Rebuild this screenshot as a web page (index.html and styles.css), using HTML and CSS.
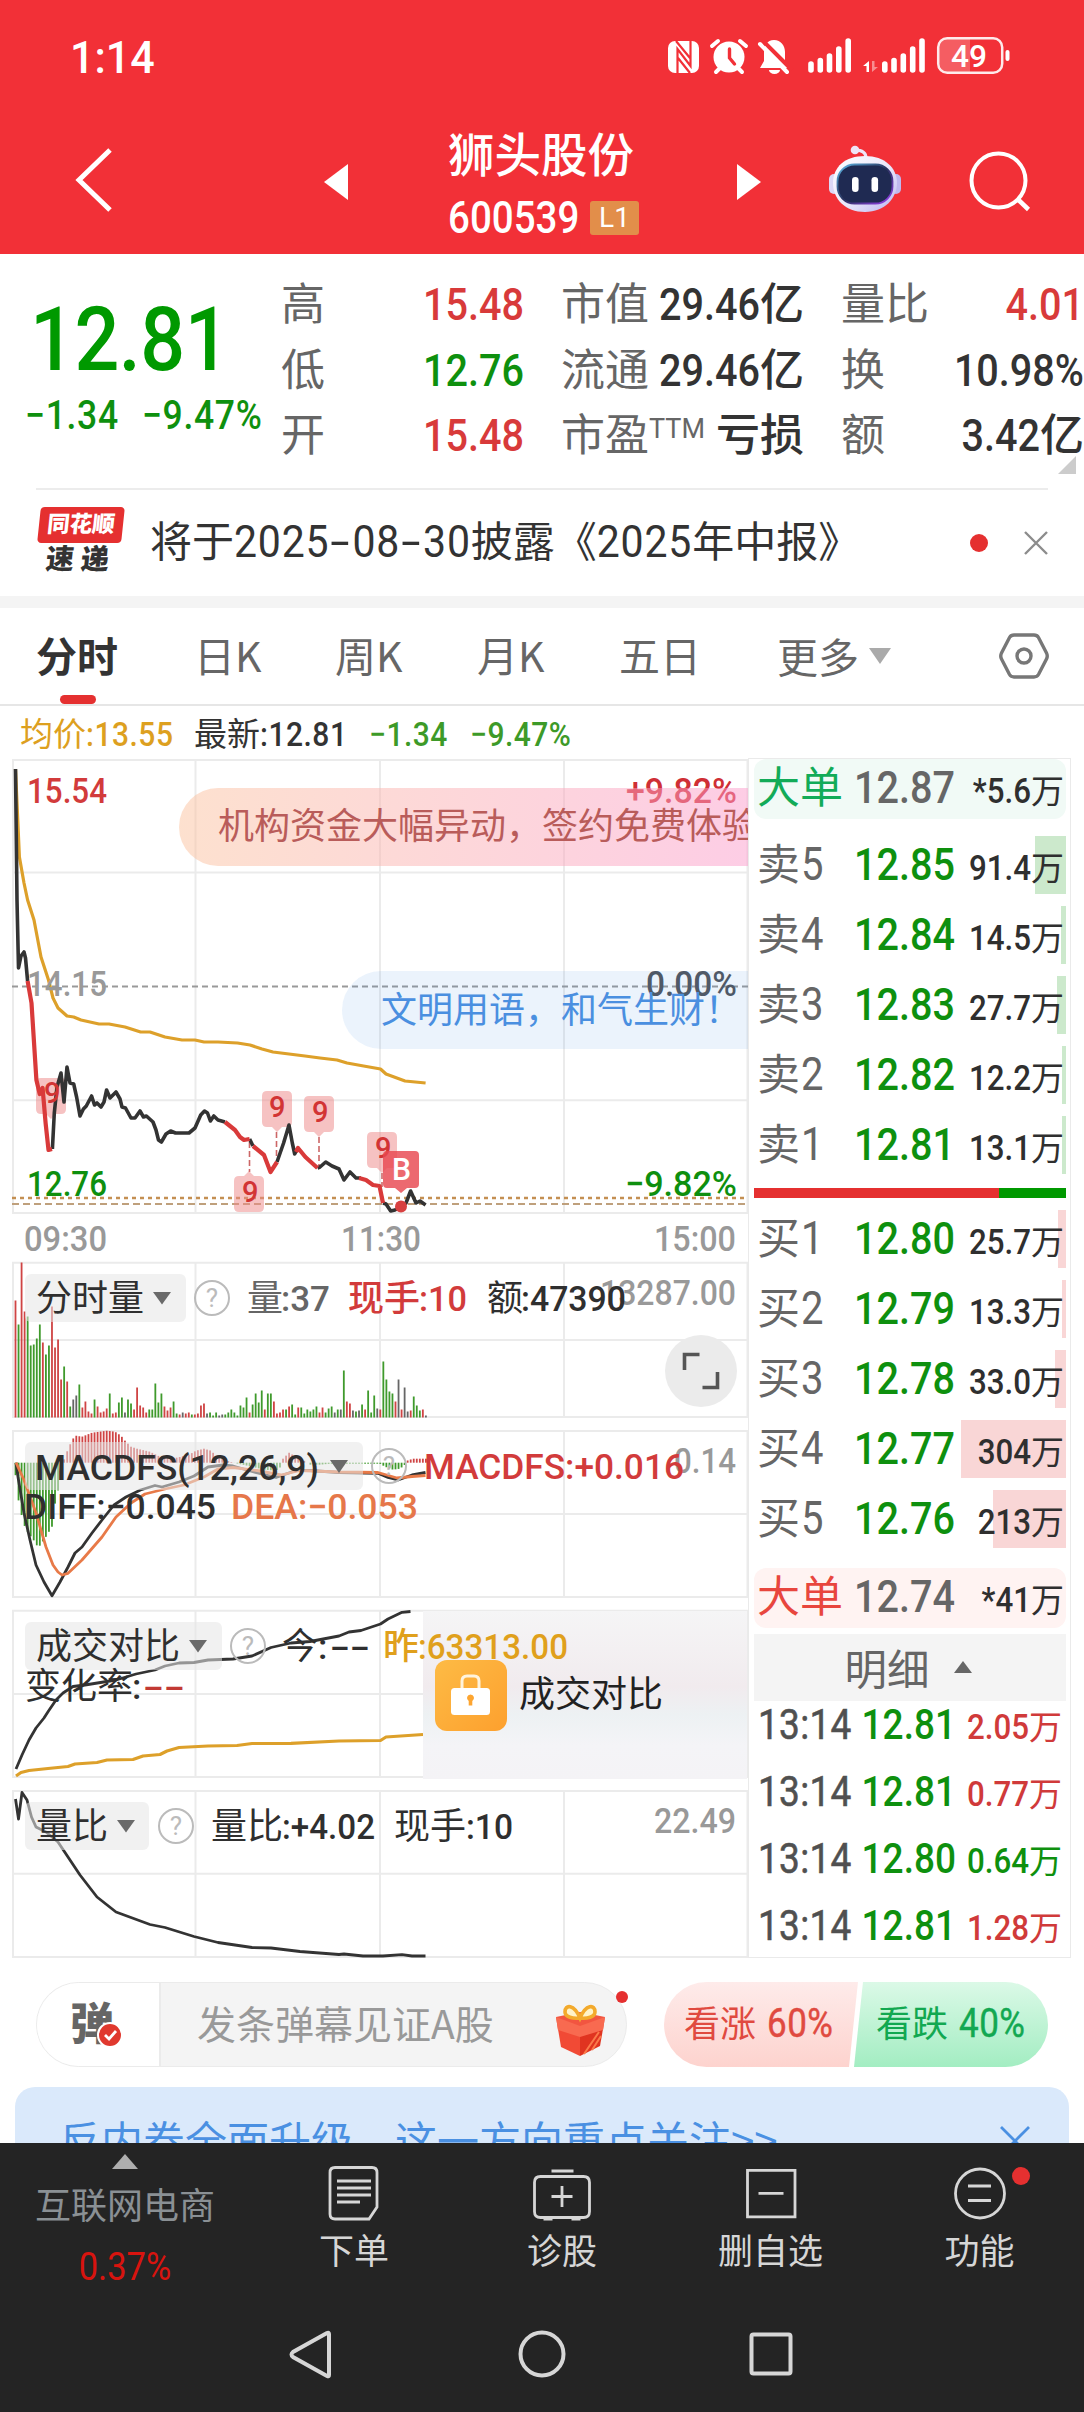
FILE: index.html
```html
<!DOCTYPE html>
<html lang="zh-CN">
<head>
<meta charset="utf-8">
<title>狮头股份 600539</title>
<link rel="stylesheet" href="styles.css">
</head>
<body>
<div class="screen">
  <header class="top">
    <div class="status">
      <span class="clock n">1:14</span>
      <svg class="status-icons" width="346" height="40" viewBox="666 36 346 40">
        <rect x="668" y="41" width="31" height="32" rx="7" fill="#fff"/>
        <path d="M677.500 73V49L690.500 66V41M678 58l12 15M676 41l14 17" fill="none" stroke="#f23037" stroke-width="2.200"/>
        <circle cx="729" cy="57" r="15.500" fill="#fff"/>
        <path d="M712 46l6-5M746 46l-6-5M716 72l5-5M742 72l-5-5" stroke="#fff" stroke-width="4" stroke-linecap="round"/>
        <path d="M729.500 49v9l5 6" fill="none" stroke="#f23037" stroke-width="3.400" stroke-linecap="round"/>
        <path d="M774 40c-7 0-10 6-10 12v9l-4 7h28l-3-7V52c0-6-4-12-11-12z" fill="#fff"/>
        <path d="M769 70h11a5.500 4 0 0 1-11 0z" fill="#fff"/>
        <path d="M762 40l30 30" stroke="#f23037" stroke-width="4"/>
        <path d="M760 44l27 28" stroke="#fff" stroke-width="4" stroke-linecap="round"/>
        <path d="M811 64v6M820.300 60.500v9.500M829.500 56v14M838.800 49v21M848.200 41v29M884.800 64v6M894 60.500v9.500M903.300 56v14M912.700 49v21M922 41v29" stroke="#fff" stroke-width="5.600" stroke-linecap="round"/>
        <path d="M863 66l6-5v11h-2.500v-6z" fill="#fff"/>
        <path d="M878 67l-6 5V61h2.500v6z" fill="#fff" opacity=".45"/>
        <path d="M949 38.500h21v34h-21a10 10 0 0 1-10-10v-14a10 10 0 0 1 10-10z" fill="#fff" opacity=".22"/>
        <rect x="938.200" y="38.200" width="64" height="34.600" rx="9" fill="none" stroke="#fff" stroke-width="2.500" opacity=".9"/>
        <rect x="1005.500" y="50" width="4" height="11" rx="2" fill="#fff"/>
        <text x="951" y="66.500" class="d" font-size="31" fill="#fff" textLength="36" lengthAdjust="spacingAndGlyphs">49</text>
      </svg>
    </div>
    <nav class="nav">
      <svg width="44" height="72" viewBox="72 144 44 72"><path d="M110 150L79 180l31 30" fill="none" stroke="#fff" stroke-width="5"/></svg>
      <svg width="24" height="36" viewBox="0 0 24 36"><path d="M24 0v36L0 18z" fill="#fff"/></svg>
      <div class="title">
        <div class="name">狮头股份</div>
        <div class="code"><span class="n">600539</span><span class="badge">L1</span></div>
      </div>
      <svg width="24" height="36" viewBox="0 0 24 36"><path d="M0 0v36l24-18z" fill="#fff"/></svg>
      <svg class="robot" width="74" height="70" viewBox="828 144 74 70">
        <defs>
          <linearGradient id="shell" x1="0" y1="0" x2="1" y2="1"><stop offset="0" stop-color="#fff"/><stop offset=".55" stop-color="#e9e6fa"/><stop offset="1" stop-color="#b9b4f0"/></linearGradient>
          <linearGradient id="visor" x1="0" y1="0" x2="1" y2="1"><stop offset="0" stop-color="#5fb8e8"/><stop offset=".5" stop-color="#27315c"/><stop offset="1" stop-color="#9a3ff0"/></linearGradient>
        </defs>
        <path d="M855 150c7 0 11 2 11 8" fill="none" stroke="#eee6f8" stroke-width="3"/>
        <circle cx="855" cy="150" r="4.300" fill="#efe4f6"/>
        <rect x="829" y="174" width="10" height="20" rx="5" fill="#dcd8f5"/><rect x="891" y="174" width="10" height="20" rx="5" fill="#bfb8ee"/>
        <path d="M865 156c20 0 32 12 32 27s-12 29-32 29-32-13-32-29 12-27 32-27z" fill="url(#shell)"/>
        <rect x="837.500" y="164.500" width="55" height="39" rx="17" fill="#1f2a52" stroke="url(#visor)" stroke-width="1.800"/>
        <rect x="852" y="177" width="6.600" height="15" rx="3.300" fill="#fff"/><rect x="871.500" y="177" width="6.600" height="15" rx="3.300" fill="#fff"/>
      </svg>
      <svg class="search" width="64" height="64" viewBox="968 150 64 64"><circle cx="998.500" cy="180.500" r="27" fill="none" stroke="#fff" stroke-width="4"/><path d="M1017.500 199l11 10.500" stroke="#fff" stroke-width="4.500"/></svg>
    </nav>
  </header>

  <section class="quote">
    <div class="last">
      <div class="price n">12.81</div>
      <div class="chg"><span class="n">−1.34</span><span class="n">−9.47%</span></div>
    </div>
    <dl class="stats">
      <div><dt>高</dt><dd class="up"><span class="n">15.48</span></dd></div>
      <div><dt>市值</dt><dd><span class="n">29.46</span>亿</dd></div>
      <div><dt>量比</dt><dd class="up"><span class="n">4.01</span></dd></div>
      <div><dt>低</dt><dd class="down"><span class="n">12.76</span></dd></div>
      <div><dt>流通</dt><dd><span class="n">29.46</span>亿</dd></div>
      <div><dt>换</dt><dd><span class="n">10.98%</span></dd></div>
      <div><dt>开</dt><dd class="up"><span class="n">15.48</span></dd></div>
      <div><dt>市盈<sup>TTM</sup></dt><dd>亏损</dd></div>
      <div><dt>额</dt><dd><span class="n">3.42</span>亿</dd></div>
    </dl>
    <i class="corner"></i>
  </section>

  <section class="news">
    <div class="logo"><div class="logo-top">同花顺</div><div class="logo-sub">速递</div></div>
    <p>将于<span class="n">2025<i class="dash">-</i>08<i class="dash">-</i>30</span>披露《<span class="n">2025</span>年中报》</p>
    <i class="dot"></i>
    <svg width="24" height="24" viewBox="0 0 24 24"><path d="M1 1l22 22M23 1L1 23" stroke="#8c8c8c" stroke-width="2.400"/></svg>
  </section>

  <nav class="tabs">
    <span class="tab on">分时</span><span class="tab">日K</span><span class="tab">周K</span><span class="tab">月K</span><span class="tab">五日</span>
    <span class="tab more">更多<svg width="22" height="17" viewBox="0 0 22 17"><path d="M0 1h22L11 17z" fill="#aaa"/></svg></span>
    <svg class="hex" width="50" height="48" viewBox="0 0 50 48"><path d="M15 3h20q3 0 4.500 2.500l8 15.500q1.500 3 0 6l-8 15.500Q38 45 35 45H15q-3 0-4.500-2.500l-8-15.500q-1.500-3 0-6l8-15.500Q12 3 15 3z" fill="none" stroke="#777" stroke-width="3.400"/><circle cx="25" cy="24" r="7" fill="none" stroke="#777" stroke-width="3.400"/></svg>
  </nav>

  <div class="legend">
    <span class="avg">均价<span class="n">:13.55</span></span>
    <span class="lst">最新<span class="n">:12.81</span></span>
    <span class="n g1">−1.34</span>
    <span class="n g1">−9.47%</span>
  </div>

  <main class="board">
    <div class="charts">
      <svg class="chart" width="748" height="502" viewBox="0 754 748 502">
        <defs>
          <linearGradient id="promo" x1="0" x2="1"><stop offset="0" stop-color="#fbc29e"/><stop offset="1" stop-color="#fb9bcb"/></linearGradient>
        </defs>
        <path class="grid" d="M12 760H748M12 872.500H748M12 1100.300H748M12 1213H748M13 760V1213M195.500 760V1213M380 760V1213M564 760V1213M747.500 760V1213"/>
        <path d="M12 986.500H748" stroke="#999" stroke-width="2" stroke-dasharray="6 4"/>
        <path d="M12 1198H748" stroke="#c48f52" stroke-width="2.300" stroke-dasharray="4 4"/>
        <path d="M12 1204H748" stroke="#bfa07c" stroke-width="2" stroke-dasharray="7 4"/>
        <polyline class="ln avgline" points="15.500,769 19.400,857 24,883 27.600,900 34,920 41,957 48.500,980 53,998 58,1008 67,1016 73.700,1017 81,1020 99,1024 109,1024 125,1027 140.600,1032 150,1032 165,1037 182,1040 195,1040 204,1042 218,1042 237.500,1043 250,1045 262,1049 273,1052 305,1056 320,1058 337,1060 347,1063 363.600,1066 380.500,1069 386,1074 405,1081 425.600,1083"/>
        <g class="flags">
          <path d="M276.500 1132v24M319 1137v30M249.500 1142v30M382 1173v14" stroke="#c66" stroke-width="1.600" stroke-dasharray="6 3" fill="none"/>
          <path class="flag" d="M41 1078h20q5 0 5 5v26q0 5-5 5h-5l-5 5-5-5h-5q-5 0-5-5v-26q0-5 5-5z"/>
          <path class="flag" d="M267 1091h20q5 0 5 5v26q0 5-5 5h-5l-5 5-5-5h-5q-5 0-5-5v-26q0-5 5-5z"/>
          <path class="flag" d="M309 1096h20q5 0 5 5v26q0 5-5 5h-5l-5 5-5-5h-5q-5 0-5-5v-26q0-5 5-5z"/>
          <path class="flag" d="M372 1132h20q5 0 5 5v26q0 5-5 5h-5l-5 5-5-5h-5q-5 0-5-5v-26q0-5 5-5z"/>
          <path class="flag" d="M239 1212h20q5 0 5-5v-26q0-5-5-5h-5l-5-5-5 5h-5q-5 0-5 5v26q0 5 5 5z"/>
        </g>
        <polyline class="ln px" points="15.500,769 17,900 18.500,968 21,956 24,952 25.500,958 27.600,981"/>
        <polyline class="ln px" points="52.400,1149 54.300,1113 57,1087 61,1073 64,1102 67,1067 70,1083 73.700,1084 76.600,1097 80,1116 83.400,1109 86.300,1106 91.600,1096 94.500,1105 97,1103 101,1107 104,1102 106.600,1090 110,1098 116,1092 120,1099 122,1107 125.500,1108 131,1118 135,1118 140,1111 143.500,1117 146.400,1116 153,1122 156,1130 158.500,1140 161.400,1142 166,1134 170.600,1131 175.500,1133 189,1133 195,1128 200.700,1115 204.500,1111 207.500,1113 210.400,1121 213.800,1116 218,1120 225,1122"/>
        <polyline class="ln px" points="249.600,1139 253,1146"/>
        <polyline class="ln px" points="277,1162 283.600,1143 289,1125 292.300,1143 294.700,1154 298,1148"/>
        <polyline class="ln px" points="317.500,1168 320,1167 325.700,1162 332,1166 339,1169 344,1180 350,1172 356,1178 361,1178"/>
        <polyline class="ln px" points="383,1203 386,1204 390.700,1211 395,1210 401,1207 406,1203 410.600,1191 416,1203 420,1201 425.600,1205"/>
        <polyline class="ln red" points="27.600,981 31.500,1003 36.400,1080 39.700,1094 42.600,1088 45.600,1123 48.500,1150 52,1149"/>
        <polyline class="ln red" points="225,1122 235,1130 240,1137 244,1140 249.600,1139"/>
        <polyline class="ln red" points="253,1146 264,1155 270.500,1172 277,1162"/>
        <polyline class="ln red" points="296,1152 298,1148 305.400,1157 317.500,1168"/>
        <polyline class="ln red" points="359,1178 366,1180 373,1185 379.500,1186 383,1203"/>
        <circle cx="401" cy="1206.500" r="6" fill="#d84040"/>
        <g class="d nine"><text x="44" y="1103">9</text><text x="269" y="1116.500">9</text><text x="312" y="1121.500">9</text><text x="242" y="1202">9</text><text x="375" y="1158">9</text></g>
        <path d="M387 1151h28q4 0 4 4v29q0 4-4 4h-8l-6 5-6-5h-8q-4 0-4-4v-29q0-4 4-4z" fill="#e84850" opacity=".82"/>
        <text class="d" x="392" y="1179.500" font-size="31" fill="#fff" textLength="19" lengthAdjust="spacingAndGlyphs">B</text>
        <g class="d ax">
          <text x="27" y="802.500" fill="#d23b3b" textLength="80" lengthAdjust="spacingAndGlyphs">15.54</text>
          <text x="626" y="802.500" fill="#cf2f35" textLength="111" lengthAdjust="spacingAndGlyphs">+9.82%</text>
          <text x="27" y="995.500" fill="#999" textLength="80" lengthAdjust="spacingAndGlyphs">14.15</text>
          <text x="646" y="995.500" fill="#505258" textLength="91" lengthAdjust="spacingAndGlyphs">0.00%</text>
          <text x="27" y="1196" fill="#0e8f0e" textLength="80" lengthAdjust="spacingAndGlyphs">12.76</text>
          <text x="625" y="1196" fill="#0e8f0e" textLength="112" lengthAdjust="spacingAndGlyphs">−9.82%</text>
          <text x="24" y="1251" fill="#999" textLength="83" lengthAdjust="spacingAndGlyphs">09:30</text>
          <text x="341" y="1251" fill="#999" textLength="80" lengthAdjust="spacingAndGlyphs">11:30</text>
          <text x="654" y="1251" fill="#999" textLength="82" lengthAdjust="spacingAndGlyphs">15:00</text>
        </g>
        <path d="M748 788H218a39 39 0 0 0 0 78H748z" fill="url(#promo)" opacity=".5"/>
        <text class="c" x="218" y="839" fill="#b95c5a">机构资金大幅异动，签约免费体验</text>
        <path d="M748 971H381a39 39 0 0 0 0 78H748z" fill="#4a90e2" opacity=".11"/>
        <text class="c" x="381" y="1022.500" fill="#4a8fe0">文明用语，和气生财！</text>
      </svg>

      <svg class="chart" width="748" height="168" viewBox="0 1256 748 168">
        <path class="grid" d="M12 1262.700H748M12 1340H748M12 1417H748M13 1263V1417M195.500 1263V1417M380 1263V1417M564 1263V1417M747.500 1263V1417"/>
        <g id="volume"></g>
        <rect class="chip" x="25" y="1274" width="161" height="48" rx="6"/>
        <text class="c k" x="36" y="1311">分时量</text>
        <path class="tri" d="M153 1292h18l-9 12.500z"/>
        <circle class="help" cx="212" cy="1298" r="17"/><text class="q" x="212" y="1307">?</text>
        <text class="c" x="247" y="1311" fill="#666">量</text><text class="d m" x="281" y="1311" fill="#666" textLength="49" lengthAdjust="spacingAndGlyphs">:37</text>
        <text class="c" x="348" y="1311" fill="#d23b3b" font-weight="500">现手</text><text class="d m" x="419" y="1311" fill="#d23b3b" textLength="48" lengthAdjust="spacingAndGlyphs">:10</text>
        <text class="d m" x="600" y="1305" fill="#999" textLength="136" lengthAdjust="spacingAndGlyphs">13287.00</text>
        <text class="c k" x="487" y="1311">额</text><text class="d m k" x="521" y="1311" textLength="105" lengthAdjust="spacingAndGlyphs">:47390</text>
        <circle cx="701" cy="1371" r="36" fill="#ebebeb"/>
        <path d="M684.500 1370v-15.500h15M717.500 1372v15.500h-15" fill="none" stroke="#555" stroke-width="3.600"/>
      </svg>

      <svg class="chart" width="748" height="180" viewBox="0 1424 748 180">
        <path class="grid" d="M12 1431H748M12 1514H748M12 1597H748M13 1431V1597M195.500 1431V1597M380 1431V1597M564 1431V1597M747.500 1431V1597"/>
        <g id="macd"></g>
        <path id="diff" class="ln thin"/>
        <path id="dea" class="ln thin dea"/>
        <rect class="chip" x="25" y="1442" width="338" height="48" rx="6"/>
        <text class="d m k" x="35" y="1479.500" textLength="284" lengthAdjust="spacingAndGlyphs">MACDFS(12,26,9)</text>
        <path class="tri" d="M330 1460h18l-9 13z"/>
        <circle class="help" cx="389" cy="1466" r="17"/><text class="q" x="389" y="1475">?</text>
        <text class="d m" x="674" y="1473" fill="#999" textLength="62" lengthAdjust="spacingAndGlyphs">0.14</text>
        <text class="d m" x="424" y="1479" fill="#d23b3b" textLength="260" lengthAdjust="spacingAndGlyphs">MACDFS:+0.016</text>
        <text class="d m k" x="24" y="1518.500" textLength="192" lengthAdjust="spacingAndGlyphs">DIFF:−0.045</text>
        <text class="d m" x="231" y="1518.500" fill="#e6774a" textLength="187" lengthAdjust="spacingAndGlyphs">DEA:−0.053</text>
      </svg>

      <svg class="chart" width="748" height="180" viewBox="0 1604 748 180">
        <defs>
          <linearGradient id="frost" x1="0" y1="0" x2="0" y2="1"><stop offset="0" stop-color="#f5f5f6"/><stop offset=".45" stop-color="#f1ebee"/><stop offset=".62" stop-color="#edf1f3"/><stop offset=".8" stop-color="#f4f4f7"/><stop offset="1" stop-color="#f4f3f6"/></linearGradient>
          <linearGradient id="gold" x1="0" y1="0" x2="1" y2="1"><stop offset="0" stop-color="#fdbb45"/><stop offset="1" stop-color="#fda02e"/></linearGradient>
        </defs>
        <path class="grid" d="M12 1610.700H748M12 1694H748M12 1777H748M13 1611V1777M195.500 1611V1777M380 1611V1777M564 1611V1777M747.500 1611V1777"/>
        <path id="today" class="ln thin"/>
        <path id="yesterday" class="ln avgline"/>
        <rect x="423" y="1611" width="324" height="168" fill="url(#frost)"/>
        <rect class="chip" x="25" y="1622" width="197" height="48" rx="6"/>
        <text class="c k" x="36" y="1659">成交对比</text>
        <path class="tri" d="M189 1640h18l-9 12.500z"/>
        <circle class="help" cx="248" cy="1646" r="17"/><text class="q" x="248" y="1655">?</text>
        <text class="c k" x="282" y="1659">今</text><text class="d m k" x="318" y="1659">:</text><text class="d m k" x="330" y="1659" textLength="40" lengthAdjust="spacingAndGlyphs">--</text>
        <text class="c" x="383" y="1659" fill="#e0a01c" font-weight="500">昨</text><text class="d m" x="418" y="1659" fill="#e0a01c" textLength="150" lengthAdjust="spacingAndGlyphs">:63313.00</text>
        <text class="c k" x="25" y="1699">变化率</text><text class="d m k" x="132" y="1699">:</text><text class="d m" x="143" y="1699" fill="#c23a34" textLength="42" lengthAdjust="spacingAndGlyphs">--</text>
        <rect x="435" y="1660" width="72" height="71" rx="12" fill="url(#gold)"/>
        <path d="M462 1689v-8q0-5 5-5h7q5 0 5 5v8" fill="none" stroke="#fff3dc" stroke-width="3"/>
        <rect x="451" y="1688" width="39" height="27" rx="3.500" fill="#fff"/>
        <path d="M470.500 1694.500a3.500 3.500 0 0 1 1.800 6.500v4.500h-3.600v-4.500a3.500 3.500 0 0 1 1.800-6.500z" fill="#fda530"/>
        <text class="c" x="519" y="1706.500" fill="#222">成交对比</text>
      </svg>

      <svg class="chart" width="748" height="176" viewBox="0 1784 748 176">
        <path class="grid" d="M12 1791H748M12 1873.700H748M12 1957H748M13 1791V1957M195.500 1791V1957M380 1791V1957M564 1791V1957M747.500 1791V1957"/>
        <path id="ratio" class="ln thin"/>
        <rect class="chip" x="25" y="1802" width="124" height="48" rx="6"/>
        <text class="c k" x="36" y="1839">量比</text>
        <path class="tri" d="M117 1820h18l-9 12.500z"/>
        <circle class="help" cx="176" cy="1826" r="17"/><text class="q" x="176" y="1835">?</text>
        <text class="c k" x="211" y="1839">量比</text><text class="d m k" x="282" y="1839" textLength="93" lengthAdjust="spacingAndGlyphs">:+4.02</text>
        <text class="c k" x="394" y="1839">现手</text><text class="d m k" x="466" y="1839" textLength="47" lengthAdjust="spacingAndGlyphs">:10</text>
        <text class="d m" x="654" y="1833" fill="#999" textLength="82" lengthAdjust="spacingAndGlyphs">22.49</text>
      </svg>
    </div>

    <aside class="book">
      <div class="row big sell"><span class="lb">大单</span><span class="pr n">12.87</span><span class="vo"><span class="n">*5.6</span>万</span></div>
      <div class="side sells">
        <div class="row"><i class="depth" style="width:31px"></i><span class="lb">卖<span class="n">5</span></span><span class="pr n">12.85</span><span class="vo"><span class="n">91.4</span>万</span></div>
        <div class="row"><i class="depth" style="width:5px"></i><span class="lb">卖<span class="n">4</span></span><span class="pr n">12.84</span><span class="vo"><span class="n">14.5</span>万</span></div>
        <div class="row"><i class="depth" style="width:9px"></i><span class="lb">卖<span class="n">3</span></span><span class="pr n">12.83</span><span class="vo"><span class="n">27.7</span>万</span></div>
        <div class="row"><i class="depth" style="width:4px"></i><span class="lb">卖<span class="n">2</span></span><span class="pr n">12.82</span><span class="vo"><span class="n">12.2</span>万</span></div>
        <div class="row"><i class="depth" style="width:4px"></i><span class="lb">卖<span class="n">1</span></span><span class="pr n">12.81</span><span class="vo"><span class="n">13.1</span>万</span></div>
      </div>
      <div class="balance"><i></i></div>
      <div class="side buys">
        <div class="row"><i class="depth" style="width:8px"></i><span class="lb">买<span class="n">1</span></span><span class="pr n">12.80</span><span class="vo"><span class="n">25.7</span>万</span></div>
        <div class="row"><i class="depth" style="width:4px"></i><span class="lb">买<span class="n">2</span></span><span class="pr n">12.79</span><span class="vo"><span class="n">13.3</span>万</span></div>
        <div class="row"><i class="depth" style="width:11px"></i><span class="lb">买<span class="n">3</span></span><span class="pr n">12.78</span><span class="vo"><span class="n">33.0</span>万</span></div>
        <div class="row"><i class="depth" style="width:105px"></i><span class="lb">买<span class="n">4</span></span><span class="pr n">12.77</span><span class="vo"><span class="n">304</span>万</span></div>
        <div class="row"><i class="depth" style="width:73px"></i><span class="lb">买<span class="n">5</span></span><span class="pr n">12.76</span><span class="vo"><span class="n">213</span>万</span></div>
      </div>
      <div class="row big buy"><span class="lb">大单</span><span class="pr n">12.74</span><span class="vo"><span class="n">*41</span>万</span></div>
      <div class="detail">明细<svg width="18" height="12" viewBox="0 0 18 12"><path d="M0 12h18L9 0z" fill="#666"/></svg></div>
      <div class="ticks">
        <div class="row up"><span class="tm n">13:14</span><span class="pr n">12.81</span><span class="vo"><span class="n">2.05</span>万</span></div>
        <div class="row up"><span class="tm n">13:14</span><span class="pr n">12.81</span><span class="vo"><span class="n">0.77</span>万</span></div>
        <div class="row down"><span class="tm n">13:14</span><span class="pr n">12.80</span><span class="vo"><span class="n">0.64</span>万</span></div>
        <div class="row up"><span class="tm n">13:14</span><span class="pr n">12.81</span><span class="vo"><span class="n">1.28</span>万</span></div>
      </div>
    </aside>
  </main>

  <section class="talk">
    <div class="danmu">
      <div class="switch">弹<svg width="26" height="26" viewBox="0 0 26 26"><circle cx="13" cy="13" r="12" fill="#e0392f" stroke="#fff" stroke-width="2"/><path d="M8 13l4 4 7-8" fill="none" stroke="#fff" stroke-width="2.800"/></svg></div>
      <div class="input"><span>发条弹幕见证A股</span>
        <svg class="gift" width="52" height="54" viewBox="554 2005 52 54">
          <path d="M556 2019l24-5 25 5-2 13-23 6-22-6z" fill="#f25540"/>
          <path d="M558 2031l22 7v20l-19-9z" fill="#f14a35"/><path d="M603 2031l-23 7v20l20-10z" fill="#e03420"/>
          <path d="M556 2019l24 9 25-9-2 13-23 7-22-7z" fill="#f86a50"/>
          <path d="M584 2056l15-22M592 2052l9-14" stroke="#fb7a4a" stroke-width="2"/>
          <path d="M580 2020c-6-14-15-14-15-6 0 5 8 7 15 6 7 1 15-1 15-6 0-8-9-8-15 6z" fill="#fff3c8" stroke="#f3aa2c" stroke-width="3.600"/>
        </svg>
      </div>
      <i class="dot"></i>
    </div>
    <div class="vote">
      <div class="bull">看涨 <span class="n">60%</span></div>
      <div class="bear">看跌 <span class="n">40%</span></div>
    </div>
  </section>

  <section class="banner">
    <span>反内卷全面升级，这一方向重点关注<span class="gt">&gt;&gt;</span></span>
    <svg width="30" height="30" viewBox="0 0 30 30"><path d="M1 1l28 28M29 1L1 29" stroke="#4a90e2" stroke-width="2.800"/></svg>
  </section>

  <footer class="dock">
    <div class="index"><i class="arrow"></i><span>互联网电商</span><b class="n">0.37%</b></div>
    <div class="item"><svg width="58" height="56" viewBox="325 2165 58 56"><path d="M335 2167.500h37q5 0 5 5V2207l-8 12h-34q-5 0-5-5v-41.500q0-5 5-5zM337 2181h34M337 2188h34M337 2195h34M337 2202h23"/></svg>下单</div>
    <div class="item"><svg width="60" height="56" viewBox="531.500 2165 60 56"><path d="M551 2171h22M540 2176.500h43q6 0 6 6v29q0 6-6 6h-43q-6 0-6-6v-29q0-6 6-6zM561.500 2186v21M551 2196.500h21M543 2219h9M571 2219h9"/></svg>诊股</div>
    <div class="item"><svg width="58" height="56" viewBox="741.500 2165 58 56"><path d="M747 2170.300h47.500v46.500H747zM758 2193.300h25"/></svg>删自选</div>
    <div class="item"><svg width="58" height="56" viewBox="950 2165 58 56"><circle cx="979" cy="2193.500" r="24.500"/><path d="M967 2186h23M967 2200.500h23"/></svg>功能<i class="dot"></i></div>
  </footer>
  <div class="sysnav">
    <svg width="44" height="50" viewBox="288 2329 44 50"><path d="M329 2334v41q0 2-2 1l-34-19q-3-2.500 0-5l34-19q2-1 2 1z"/></svg>
    <svg width="50" height="50" viewBox="517 2329 50 50"><circle cx="542" cy="2354" r="21.500"/></svg>
    <svg width="48" height="50" viewBox="747.500 2329 48 50"><rect x="752" y="2334.500" width="39" height="39" rx="2"/></svg>
  </div>
</div>
<script src="charts.js"></script>
</body>
</html>
```

FILE: styles.css
```css
* { box-sizing: border-box; margin: 0; padding: 0; }
body {
  width: 1084px; height: 2412px; overflow: hidden; background: #fff; color: #333;
  font-family: Roboto, "Noto Sans CJK SC", sans-serif;
}
i { font-style: normal; }
svg { display: block; flex: none; }
.screen { width: 1084px; height: 2412px; display: flex; flex-direction: column; overflow: hidden; }
.screen > * { flex: none; }

/* tall, narrow figures */
.n {
  display: inline-block; font-family: Roboto, sans-serif; font-weight: 500; line-height: 1;
  transform: scaleY(1.136); transform-origin: 0 84%; white-space: nowrap;
}
.up { color: #d83a3a; }
.down { color: #0e900e; }

/* header */
.top { height: 254px; background: #f23037; color: #fff; }
.status { height: 110px; padding: 36px 72px 0 70px; display: flex; justify-content: space-between; }
.clock { font-size: 43px; height: 43px; margin-top: 1px; transform: scaleY(1.05); }
.nav {
  height: 144px; display: grid; align-items: start; justify-items: start;
  grid-template-columns: 252px 113px 300px 91px 140px 1fr; padding-left: 72px;
}
.nav > svg { margin-top: 54px; }
.nav > svg:first-child { margin-top: 34px; }
.nav > .robot { margin-top: 34px; }
.nav > .search { margin-top: 40px; }
.title { padding-left: 11px; }
.name { font-size: 46.500px; line-height: 54px; font-weight: 500; margin-top: 19px; white-space: nowrap; }
.code { display: flex; align-items: center; margin-top: 17px; height: 40px; }
.code .n { font-size: 38.500px; width: 142px; }
.badge { width: 49px; height: 34px; margin-top: -4px; border-radius: 3px; background: #e28e4a; font-size: 28px; line-height: 34px; text-align: center; }

/* quote */
.quote { height: 234px; display: flex; position: relative; }
.last { width: 281px; color: #009900; }
.price { font-size: 79px; padding-left: 30px; margin-top: 50px; letter-spacing: -.5px; }
.chg { display: flex; gap: 23px; padding-left: 25px; margin-top: 17px; color: #0e900e; font-size: 35.500px; letter-spacing: .7px; }
.stats { display: grid; grid-template-columns: 243px 243px 243px; grid-auto-rows: 65.500px; column-gap: 37px; padding-top: 19px; }
.stats > div { display: flex; justify-content: space-between; align-items: baseline; font-size: 44px; line-height: 64px; white-space: nowrap; }
.stats dt { color: #666; }
.stats dd { font-weight: 500; }
.stats .n { font-size: 39.600px; }
.stats sup { font-size: 27px; line-height: 1; vertical-align: 13px; font-weight: 400; }
.corner { position: absolute; right: 8px; bottom: 14px; border: 9px solid transparent; border-right-color: #ccc; border-bottom-color: #ccc; }

/* news */
.news { height: 108px; margin: 0 36px; border-top: 2px solid #ececec; display: flex; align-items: center; }
.news p { flex: 1; font-size: 42px; white-space: nowrap; margin-left: 24px; line-height: 60px; }
.news .n { font-size: 41px; font-weight: 400; transform: scaleY(1.1); letter-spacing: .8px; }
.dash { display: inline-block; width: 23px; text-align: center; transform: scaleX(1.7); }
.dot { display: block; width: 18px; height: 18px; border-radius: 50%; background: #e53030; }
.news .dot { margin-right: 36px; }
.logo { width: 90px; height: 74px; font-weight: 900; white-space: nowrap; }
.logo-top { height: 36px; width: 84px; margin: 1px 0 0 3px; border-radius: 4px; background: #e53030; color: #fff; font-size: 22.500px; line-height: 35px; text-align: center; transform: skewX(-6deg); }
.logo-sub { font-size: 28px; line-height: 34px; letter-spacing: 7px; padding-left: 10px; transform: skewX(-6deg); }

/* tabs */
.tabs { height: 110px; border-top: 12px solid #f4f4f4; border-bottom: 2px solid #e6e6e6; display: grid; grid-template-columns: 158px 141px 142px 142px 158px 222px 1fr; padding-left: 36px; font-size: 41px; line-height: 92px; color: #666; white-space: nowrap; font-family: "Noto Sans CJK SC", sans-serif; }
.tab { position: relative; }
.tab.on { font-weight: 700; color: #333; }
.tab.on::after { content: ""; position: absolute; left: 24px; bottom: 0; width: 36px; height: 9px; border-radius: 5px; background: #e53030; }
.more { display: flex; align-items: center; gap: 10px; height: 94px; }
.hex { margin: 24px 0 0 0; }

.legend { height: 48px; display: flex; align-items: baseline; font-size: 33px; line-height: 57px; padding-left: 20px; white-space: nowrap; }
.legend .n { font-size: 30px; letter-spacing: .5px; }
.avg { width: 174px; color: #dda01f; }
.lst { width: 175px; }
.g1 { color: #3d9a28; width: 101px; }

/* board */
.board { height: 1206px; display: flex; }
.charts { width: 748px; display: flex; flex-direction: column; }
.grid { stroke: #ebebeb; stroke-width: 2; fill: none; }
.ln { fill: none; stroke: #333; stroke-width: 3.600; stroke-linejoin: round; }
.ln.red { stroke: #d93a3a; stroke-width: 4.200; }
.ln.thin { stroke-width: 2.800; }
.ln.avgline { stroke: #dda02a; stroke-width: 3.200; }
.ln.dea { stroke: #e87a48; }
.flag { fill: #ee8a8a; opacity: .52; }
.nine { font-size: 29px; fill: #d23434; }
.d { font-family: Roboto, sans-serif; font-weight: 500; }
.ax, .m { font-size: 35.500px; }
.c { font-family: "Noto Sans CJK SC", sans-serif; font-size: 36px; }
.k { fill: #2f2f2f; }
.chip { fill: #e6e6e6; opacity: .55; }
.tri { fill: #6a6a6a; }
.help { fill: none; stroke: #bbb; stroke-width: 2; }
.q { font: 26px Roboto, sans-serif; fill: #bbb; text-anchor: middle; }

.book { width: 323px; height: 1200px; margin-top: 4px; border: 1px solid #eaeaea; padding: 0 4px 0 5px; }
.row { position: relative; height: 58px; display: grid; grid-template-columns: 80px 118px 109px; align-items: baseline; padding-left: 3px; font-size: 43px; line-height: 58px; color: #666; white-space: nowrap; }
.row > span { position: relative; }
.row .lb .n { font-weight: 400; font-size: 40px; margin-left: 1px; }
.row .pr { font-size: 39.600px; justify-self: end; text-align: right; color: #0e900e; }
.row .vo { font-size: 33px; color: #2f2f2f; justify-self: end; }
.row .vo .n { font-size: 31.300px; }
.depth { position: absolute; right: 0; top: 0; bottom: 0; }
.sells .depth { background: #cce9cc; }
.buys .depth { background: #f9d6d6; }
.side { display: grid; grid-template-columns: 312px; gap: 12px; }
.sells { margin-top: 17px; }
.buys { margin-top: 12px; }
.big { height: 60px; border-radius: 12px; }
.big .pr.n { color: #666; }
.sell { background: #f1faf6; }
.sell .lb { color: #12ab58; }
.buy { background: #fff3f2; margin-top: 20px; }
.buy .lb { color: #e8463e; }
.balance { height: 10px; margin-top: 14px; background: #009900; }
.balance i { display: block; width: 245px; height: 10px; background: #e53030; }
.detail { height: 67px; margin-top: 6px; background: #f4f4f4; display: flex; align-items: center; justify-content: center; gap: 24px; padding-right: 4px; padding-bottom: 2px; font-size: 42.500px; color: #666; }
.ticks { display: grid; grid-template-columns: 312px; grid-auto-rows: 67px; }
.ticks .row { grid-template-columns: 94px 104px 106px; line-height: 53px; height: 67px; padding-left: 4px; }
.ticks .tm { font-size: 37px; color: #505050; font-weight: 400; -webkit-text-stroke: .5px #505050; letter-spacing: .3px; }
.ticks .pr { font-size: 37px; }
.ticks .row.up .vo { color: #d03a3a; }
.ticks .row.down .vo { color: #0e900e; }

/* chat and vote */
.talk { height: 127px; display: flex; gap: 37px; padding: 22px 36px 0; }
.danmu { position: relative; width: 591px; height: 85px; display: flex; border: 1.500px solid #ebebeb; border-radius: 43px; background: #f4f4f4; }
.switch { position: relative; width: 124px; background: #fff; border-right: 2px solid #ebebeb; border-radius: 43px 0 0 43px; padding-left: 33px; font: 900 44px/76px "Noto Sans CJK SC", sans-serif; color: #666; }
.switch svg { position: absolute; left: 60px; top: 39px; }
.input { flex: 1; display: flex; align-items: center; justify-content: space-between; padding: 0 20px 0 36px; font: 39px/80px "Noto Sans CJK SC", sans-serif; color: #999; white-space: nowrap; }
.input span { padding-bottom: 5px; }
.gift { margin-top: 10px; }
.danmu > .dot { position: absolute; right: -2px; top: 8px; width: 12px; height: 12px; }
.vote { width: 384px; height: 85px; display: flex; border-radius: 43px; overflow: hidden; font: 36px/78px "Noto Sans CJK SC", sans-serif; white-space: nowrap; }
.vote > div { display: flex; align-items: baseline; gap: 11px; }
.vote .n { font-size: 35px; font-weight: 400; letter-spacing: .5px; -webkit-text-stroke: .4px; }
.bull { width: 194px; padding-left: 20px; color: #e04a40; background: linear-gradient(#feebea, #fdd3ce); clip-path: polygon(0 0, 100% 0, 185px 100%, 0 100%); }
.bear { flex: 1; margin-left: -4px; padding-left: 22px; color: #12a851; background: linear-gradient(#dbf9e7, #a3edc2); clip-path: polygon(9px 0, 100% 0, 100% 100%, 0 100%); }

.banner { height: 56px; margin: 0 15px; overflow: hidden; border-radius: 20px 20px 0 0; background: #dae9fb; color: #4a90e2; display: flex; justify-content: space-between; align-items: flex-start; padding: 0 39px 0 44px; font: 42px/60px "Noto Sans CJK SC", sans-serif; white-space: nowrap; }
.banner > span { margin-top: 22px; }
.banner svg { margin-top: 39px; }

/* bottom */
.dock { height: 154px; background: #242424; color: #d6d6d6; display: grid; grid-template-columns: 250px 208px 208px 209px 209px; font: 35px/44px "Noto Sans CJK SC", sans-serif; }
.index { display: flex; flex-direction: column; align-items: center; width: 250px; color: #8a9094; font-size: 36px; }
.arrow { border: 13px solid transparent; border-top: 0; border-bottom: 15px solid #aeaeae; margin-top: 11px; }
.index span { margin-top: 12px; }
.index b { font-size: 34.500px; font-weight: 400; color: #d8140f; margin-top: 26px; }
.item { position: relative; display: flex; flex-direction: column; align-items: center; padding-top: 22px; gap: 6px; }
.item svg { fill: none; stroke: #d6d6d6; stroke-width: 2.800; }
.item .dot { position: absolute; left: 137px; top: 24px; }
.sysnav { height: 115px; background: #242424; display: grid; grid-template-columns: 229px 230px 1fr; padding: 32px 0 0 288px; }
.sysnav svg { fill: none; stroke: #d6d6d6; stroke-width: 4; }
```

FILE: charts.js
```js
const NS = "http://www.w3.org/2000/svg";
const GREEN = "#3f9a2c", RED = "#cf4444", DARK = "#666";

function bar(parent, x, y0, y1, color) {
  const r = document.createElementNS(NS, "rect");
  r.setAttribute("x", x - 0.9);
  r.setAttribute("y", Math.min(y0, y1));
  r.setAttribute("width", 1.8);
  r.setAttribute("height", Math.abs(y1 - y0));
  r.setAttribute("fill", color);
  parent.appendChild(r);
}

// one entry per minute: height in px and direction
const volume = ("117r 93g 155r 106r 101g 72g 73g 79g 93g 75r 63g 72g 111r 70r 78r 38r 51g 36r 11g 18k 22k 33g 10r 16r 6r 4r 18g 11r 5r 6r 9r 24g 4r 5r 15g 20g 5k 18g 14g 8r 30r 12r 10r 5r 8g 8g 34g 15g 24g 11r 7r 10r 16g 4g 3r 5k 4r 5r 3g 3r 4r 12r 14r 4k 5g 2g 5g 2k 3k 3g 5g 8g 5g 2g 12g 10g 20g 5r 13g 24g 15g 27g 8r 24g 24g 16r 4r 5r 8r 8g 11r 13g 3g 10r 10g 4g 8g 6g 8g 11g 5r 10r 5g 9g 11g 5k 8g 8k 47g 16r 14r 7k 6g 7k 13g 8r 27g 5g 22g 9k 8r 56g 38g 26g 24g 16r 38k 8r 30k 6k 7r 21g 12g 7g 8r 2k").split(" ");
const vg = document.getElementById("volume");
volume.forEach((v, i) => {
  const h = parseInt(v, 10), c = v.slice(-1);
  bar(vg, 15.5 + i * 3.04, 1417.5, 1417.5 - h, c === "r" ? RED : c === "g" ? GREEN : DARK);
});

function interp(pts, x) {
  for (let i = 1; i < pts.length; i++) {
    if (x <= pts[i][0]) {
      const [a, b] = pts[i - 1], [c, d] = pts[i];
      return b + (d - b) * (x - a) / (c - a);
    }
  }
  return pts[pts.length - 1][1];
}
const hist = [[15,-8],[18,-35],[21,-50],[24,-62],[28,-70],[34,-78],[37,-83],[40,-83],[46,-74],[52,-64],[55,-41],[58,-28],[63,-5],[64,3],[67,11],[70,18],[73,24],[76,27],[82,26],[92,30],[107,32],[115,31],[121,27],[125,22],[131,16],[137,14],[150,11],[160,6],[177,5],[189,8],[196,12],[204,14],[211,12],[218,5],[230,1],[238,-1],[252,-4],[264,-7],[276,-8],[281,-4],[283,4],[289,10],[296,6],[306,1],[310,-2],[320,-2],[330,-1],[380,-1],[385,-4],[393,-7],[400,-6],[405,-2],[407,2],[413,4],[426,4]];
const mg = document.getElementById("macd");
for (let i = 0; i < 136; i++) {
  const x = 15.5 + i * 3.04, v = interp(hist, x);
  bar(mg, x, 1462.7, 1462.7 - v, v > 0 ? RED : GREEN);
}

function line(id, pts) {
  document.getElementById(id).setAttribute("d", "M" + pts.map(p => p.join(" ")).join("L"));
}
line("diff", [[16,1462.7],[18,1477],[24,1513],[30,1540],[36,1565],[44,1582],[52,1595.7],[60,1582],[68,1567],[75,1553],[82,1547],[92,1533],[102,1520],[114,1505],[126,1497],[140.5,1490],[155,1485.5],[162,1487],[179,1482],[194,1476],[208,1467],[223,1465],[233,1466],[252,1471.5],[276,1477.5],[286,1474],[296,1470.5],[310,1470.5],[339,1472.5],[378,1473.3],[388,1477.5],[398,1480],[412,1475],[425.5,1472.5]]);
line("dea", [[16,1462.7],[24,1480],[36,1513],[46,1547],[53,1565],[58,1572],[62,1575],[68,1573.3],[82,1560],[102,1537],[116,1517],[131,1503],[145,1494],[165,1489],[184,1485],[204,1477],[218,1469],[233,1467.5],[257,1470.5],[281,1475],[300,1470.5],[339,1472],[378,1472.5],[397,1478],[412,1476.5],[425.5,1475.5]]);
line("today", [[16,1769],[19,1762],[22,1755],[29,1740],[36,1728],[44,1718],[48.500,1711],[56,1700],[63,1693],[73,1686.5],[85,1685],[116,1680],[136,1674],[155,1670],[165,1666],[179,1663],[194,1662.5],[208,1660],[233,1659],[252,1656],[271,1647.5],[291,1643],[310,1641.5],[339,1636],[349,1632],[361,1630.5],[380.5,1624],[388,1619],[402,1612.3],[410.5,1611.5]]);
line("yesterday", [[16,1776],[21,1772.500],[29,1770.5],[48,1768.5],[68,1766.5],[75,1764],[97,1762.5],[107,1760],[133,1759.5],[143,1756],[160,1754.5],[167,1751],[179,1747.5],[208,1746],[237,1745.5],[252,1743.5],[291,1743.300],[339,1741],[380.5,1740.5],[386,1737],[423,1734.5]]);
line("ratio", [[15.5,1799],[18.5,1819],[22,1792.5],[27,1800],[31.5,1817],[36,1827],[46,1832],[58,1842],[68,1857],[80,1875],[97,1897],[116,1912],[150,1924.5],[165,1927.5],[194,1936.5],[218,1942.5],[252,1947.5],[271,1948],[300,1951.5],[339,1954.5],[344,1954],[363,1956],[383,1956],[402,1954.7],[412,1956],[425.5,1956]]);
```
